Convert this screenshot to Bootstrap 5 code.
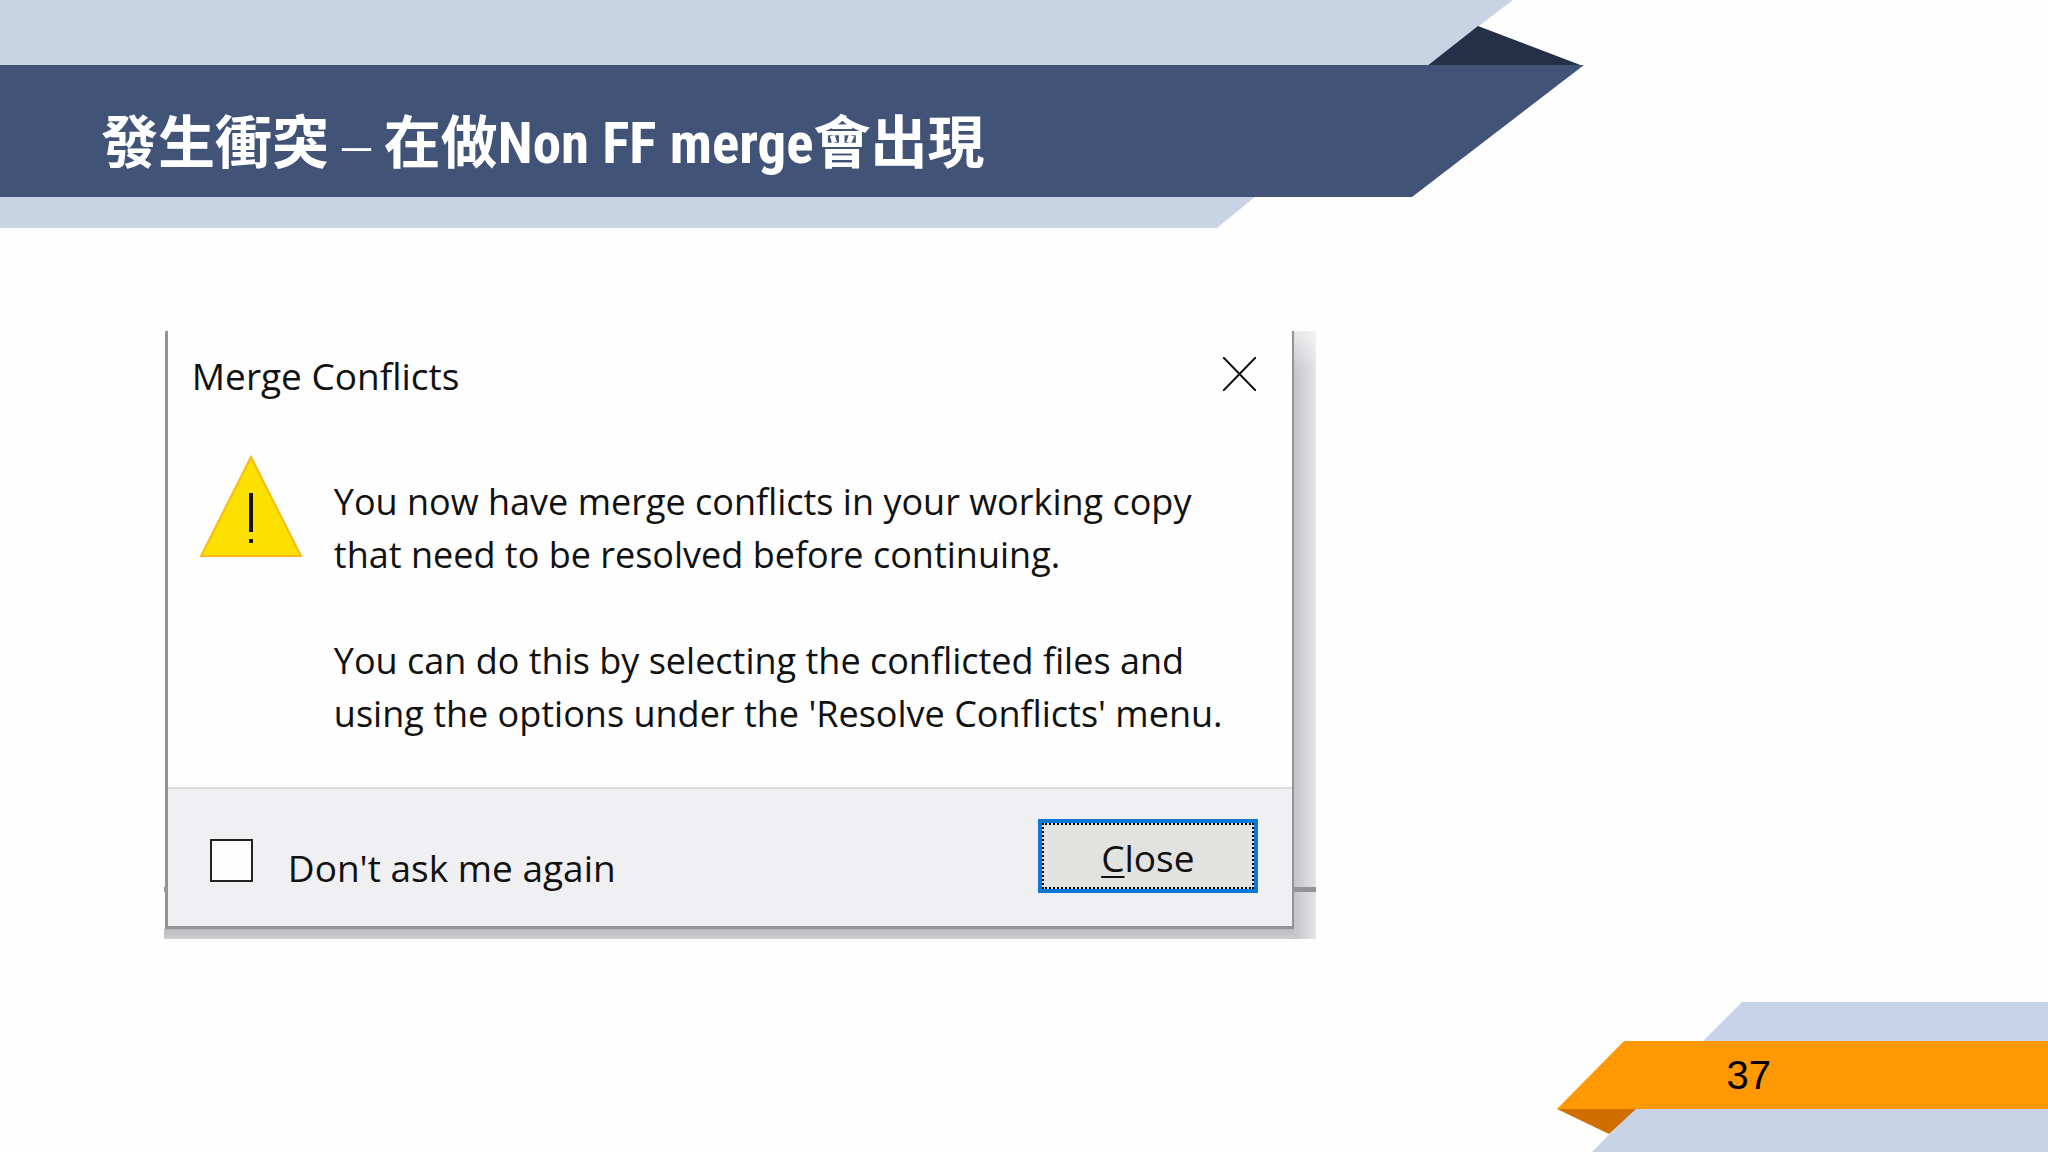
<!DOCTYPE html>
<html lang="zh-Hant">
<head>
<meta charset="utf-8">
<meta name="viewport" content="width=device-width, initial-scale=1">
<title>發生衝突 – 在做Non FF merge會出現</title>
<link rel="stylesheet" href="https://cdn.jsdelivr.net/npm/bootstrap@5.3.0/dist/css/bootstrap.min.css">
<style>
  body { background: #fefefe; color: #000; overflow-x: hidden; }
  .stack { display: grid; }
  .stack > * { grid-area: 1 / 1; }
  .stack > svg { width: 100%; height: auto; display: block; }

  .slide-title {
    margin: 0 0 0 101px;
    padding-top: 102px;
    font: 700 57px/84px "Roboto Condensed", Roboto, "Noto Sans CJK TC", sans-serif;
    color: #fff;
    white-space: nowrap;
  }
  .dash { font-family: "Liberation Serif", serif; font-weight: 400; }

  .slide-body { padding: 103px 0 0 8%; }

  /* desktop strip showing behind the dialog: shadow on the right and below */
  .shot {
    width: 1152px;
    max-width: 100%;
    padding: 0 22px 10px 1px;
    background:
      linear-gradient(#fefefe99, #fefefe00 40px) right top / 22px 100% no-repeat,
      linear-gradient(#949396, #949396) right bottom 47px / 100% 5px no-repeat,
      linear-gradient(90deg, #c6c4c8, #e4e3e6) right top / 22px 100% no-repeat,
      linear-gradient(#bbb9bd, #d0ced2) left bottom / 100% 10px no-repeat;
  }
  .dialog-box {
    border: solid #949397;
    border-width: 0 2px 3px 3px;
    background: #fefefe;
    font: 400 37px/53px "Open Sans", "Noto Sans", sans-serif;
    color: #111;
    white-space: nowrap;
  }
  .dialog-head { padding: 18px 36px 0 24px; }
  .dialog-head h2 { font: inherit; margin: 0; }
  .dialog-copy { padding: 73px 0 47px 24px; font-size: 36px; }
  .dialog-copy p { margin: 0 0 53px; }
  .dialog-copy p:last-child { margin: 0; }
  .icon-close { border: 0; background: none; padding: 0; line-height: 0; margin-top: 8px; }
  .dialog-foot {
    border-top: 2px solid #dddcdf;
    background: #f0eff1;
    padding: 30px 34px 32px 42px;
  }
  .tick {
    appearance: none;
    width: 43px; height: 43px;
    margin: 0;
    border: 2px solid #222;
    background: #fefefe;
  }
  .tick-label { padding: 6px 0 0 35px; }
  .btn-close-dialog {
    width: 220px; height: 74px;
    padding: 4px;
    border: 0; border-radius: 0;
    background: #0a78d7;
    font: inherit; color: #111;
  }
  .btn-face {
    height: 66px;
    padding-top: 4px;
    border: 2px dotted #000;
    background: #e2e2e1;
    line-height: 58px;
  }
  .access { text-decoration: underline; text-decoration-thickness: 2px; text-underline-offset: 4px; }
  .page-number { font: 400 40px/46px "Liberation Sans", sans-serif; justify-self: end; margin: 51px 277px 0 0; }
</style>
</head>
<body class="d-flex flex-column min-vh-100">

<header class="stack">
  <svg viewBox="0 0 2048 228" aria-hidden="true">
    <path fill="#c8d3e4" d="M0 0H1513L1428 65H0z"/>
    <path fill="#253048" d="M1478 26L1583 66H1427z"/>
    <path fill="#c8d3e4" d="M0 196H1256L1217 228H0z"/>
    <path fill="#415377" d="M0 65H1584L1412 197H0z"/>
  </svg>
  <h1 class="slide-title">發生衝突 <span class="dash">–</span> 在做Non FF merge會出現</h1>
</header>

<main class="slide-body">
  <div class="shot">
    <section class="dialog-box" aria-labelledby="dlg-title">
      <div class="dialog-head d-flex justify-content-between align-items-start">
        <h2 id="dlg-title">Merge Conflicts</h2>
        <button class="icon-close" type="button" aria-label="Close window">
          <svg width="33" height="34" viewBox="0 0 33 34" fill="none" stroke="#111" stroke-width="2"><path d="M0 0L33 34M33 0L0 34"/></svg>
        </button>
      </div>
      <div class="d-flex">
        <svg class="flex-shrink-0 mt-5 ms-4" width="118" height="110" viewBox="0 0 118 110" aria-hidden="true">
          <path d="M59 7L109 106H9z" fill="#fbe000" stroke="#fdb913" stroke-width="2"/>
          <path d="M59 43V82M59 89V93" stroke="#111" stroke-width="4"/>
        </svg>
        <div class="dialog-copy">
          <p>You now have merge conflicts in your working copy<br>that need to be resolved before continuing.</p>
          <p>You can do this by selecting the conflicted files and<br>using the options under the 'Resolve Conflicts' menu.</p>
        </div>
      </div>
      <div class="dialog-foot d-flex justify-content-between align-items-start">
        <div class="d-flex align-items-start mt-3">
          <input class="tick mt-1" type="checkbox" id="dont-ask">
          <label class="tick-label" for="dont-ask">Don't ask me again</label>
        </div>
        <button class="btn-close-dialog" type="button"><span class="btn-face d-block"><span class="access">C</span>lose</span></button>
      </div>
    </section>
  </div>
</main>

<footer class="stack mt-auto">
  <svg viewBox="0 0 2048 151" aria-hidden="true">
    <path fill="#c8d2e9" d="M1742 1H2048V40H1703z"/>
    <path fill="#c8d3e6" d="M1635 107H2048V151H1592z"/>
    <path fill="#d06e00" d="M1557 108H1636L1609 133z"/>
    <path fill="#ff9903" d="M1624 40H2048V108H1557z"/>
  </svg>
  <div class="page-number">37</div>
</footer>

<script src="https://cdn.jsdelivr.net/npm/bootstrap@5.3.0/dist/js/bootstrap.bundle.min.js"></script>
</body>
</html>
